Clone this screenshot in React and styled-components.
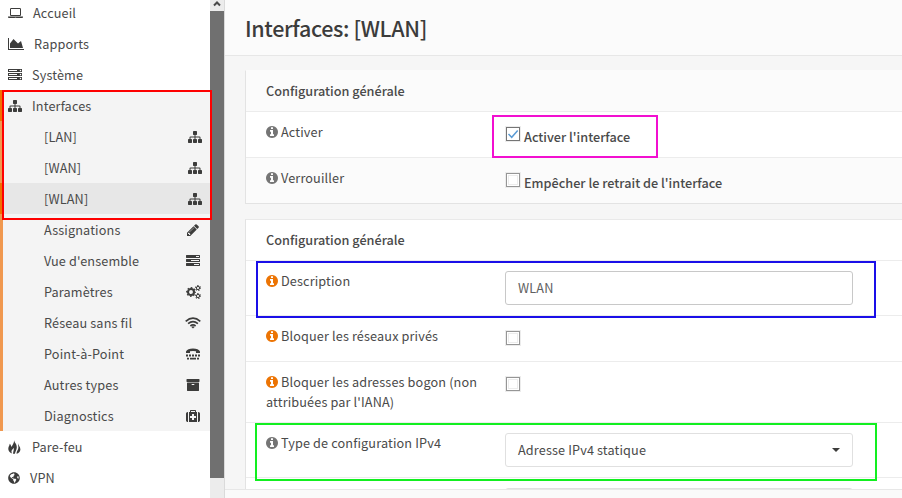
import React from "react";
import styled, { createGlobalStyle } from "styled-components";
import { FaGlobeAmericas } from "react-icons/fa";

const Global = createGlobalStyle`
  *, *::before, *::after { box-sizing: border-box; }
  body {
    margin: 0;
    overflow: hidden;
    font-family: "Noto Sans CJK SC", "Noto Sans", sans-serif;
    font-size: 12.7px;
    line-height: 20px;
    letter-spacing: 0.13px;
    color: #4a4a4a;
  }
`;

const Page = styled.div`
  position: relative;
  display: flex;
  width: 902px;
  height: 498px;
  overflow: hidden;
  background: #f6f6f6;
`;

const Sidebar = styled.nav`
  flex: none;
  width: 210px;
  height: 498px;
  overflow: hidden;
  background: #fff;
`;

const MenuList = styled.div`
  display: flex;
  flex-direction: column;
  margin-top: -3px;
`;

const MenuItem = styled.a`
  display: flex;
  flex: none;
  align-items: center;
  height: 31px;
  padding-left: ${(p) => (p.$open ? 5 : 8)}px;
  border-left: ${(p) => (p.$open ? "3px solid #f07000" : "0")};
  background: ${(p) => (p.$open ? "#f4f4f4" : "#fff")};
  svg { margin-right: ${(p) => p.$gap}px; }
`;

const SubItem = styled.a`
  display: flex;
  flex: none;
  align-items: center;
  justify-content: space-between;
  height: 31px;
  padding: 0 ${(p) => p.$end}px 0 41px;
  border-left: 3px solid ${(p) => (p.$active ? "#f07000" : "#f0984f")};
  background: ${(p) => (p.$active ? "#e7e7e7" : "#f4f4f4")};
`;

const Glyph = styled.svg`
  flex: none;
  display: block;
  fill: #3c3c3b;
  color: #3c3c3b;
`;

const Scrollbar = styled.div`
  display: flex;
  flex: none;
  flex-direction: column;
  width: 15px;
  background: #ececec;
  border-right: 1px solid #dadada;
`;

const ScrollUp = styled.div`
  display: flex;
  justify-content: center;
  height: 11px;
  svg { display: block; margin-left: -1px; }
`;

const Thumb = styled.div`
  height: 467px;
  background: #707070;
`;

const Main = styled.main`
  display: flex;
  flex: 1;
  flex-direction: column;
  min-width: 0;
  height: 498px;
`;

const PageHead = styled.header`
  flex: none;
  height: 56px;
  padding: 12px 0 0 20px;
  border-bottom: 1px solid #e7e7e7;
  background: #fbfbfb;
`;

const Title = styled.h1`
  margin: 0;
  font-size: 21.5px;
  font-weight: 500;
  line-height: 32px;
  letter-spacing: -0.36px;
  color: #3c3c3b;
`;

const Content = styled.div`
  display: flex;
  flex: 1;
  flex-direction: column;
  gap: 15px;
  min-height: 0;
  padding: 14px 0 0 20px;
  overflow: hidden;
`;

const Panel = styled.section`
  flex: none;
  border-left: 1px solid #e3e3e3;
  border-top: 1px solid ${(p) => (p.$shaded ? "#fbfbfb" : "#e9e9e9")};
  border-bottom: 1px solid #e3e3e3;
  background: #fff;
`;

const PanelTitle = styled.h2`
  height: 40px;
  margin: 0;
  padding: 10px 20px;
  font-size: 12.7px;
  font-weight: 500;
  line-height: 20px;
  letter-spacing: 0;
  background: ${(p) => (p.$shaded ? "#fbfbfb" : "#fff")};
`;

const Row = styled.div`
  display: grid;
  grid-template-columns: 239px 348px;
  height: ${(p) => p.$h}px;
  padding: 10px 20px 0;
  border-top: 1px solid #ececec;
  background: ${(p) => (p.$shaded ? "#fbfbfb" : "#fff")};
`;

const Label = styled.div`
  width: 225px;
  svg {
    display: inline-block;
    vertical-align: -1px;
    fill: ${(p) => (p.$accent ? "#ec7404" : "#757575")};
  }
`;

const CheckLine = styled.label`
  display: flex;
  align-items: flex-start;
  gap: 4px;
  padding: 5px 0 0 1px;
  font-weight: 500;
  letter-spacing: 0;
`;

const Box = styled.i`
  display: flex;
  align-items: center;
  justify-content: center;
  flex: none;
  width: 14px;
  height: 14px;
  border: 1px solid ${(p) => (p.$on ? "#757575" : "#969696")};
  background: #fff;
  box-shadow: 0 0 0 1px #ececec, inset 0 0 0 1px #fff, inset 0 0 0 2px ${(p) => (p.$on ? "#fff" : "#ececec")};
`;

const Field = styled.div`
  display: flex;
  align-items: center;
  justify-content: space-between;
  width: 348px;
  height: 34px;
  padding: 0 12px;
  border: 1px solid ${(p) => (p.$select ? "#e0e0e0" : "#c8c8c8")};
  border-radius: 3px;
  background: #fff;
  color: ${(p) => (p.$select ? "#4a4a4a" : "#606060")};
`;

const Caret = styled.span`
  border: 4px solid transparent;
  border-top-color: #3c3c3b;
  border-bottom: 0;
`;

const Footer = styled.footer`
  flex: none;
  height: 9px;
  border-top: 1px solid #e7e7e7;
  background: #fafafa;
`;

const Highlight = styled.div`
  position: absolute;
  left: ${(p) => p.$x}px;
  top: ${(p) => p.$y}px;
  width: ${(p) => p.$w}px;
  height: ${(p) => p.$h}px;
  border: 2px solid ${(p) => p.$c};
  pointer-events: none;
`;

const icons = {
  laptop: [1920, "M416 1280q-66 0-113-47t-47-113v-704q0-66 47-113t113-47h1088q66 0 113 47t47 113v704q0 66-47 113t-113 47h-1088zm-32-864v704q0 13 9.5 22.5t22.5 9.5h1088q13 0 22.5-9.5t9.5-22.5v-704q0-13-9.5-22.5t-22.5-9.5h-1088q-13 0-22.5 9.5t-9.5 22.5zm1376 928h160v96q0 40-47 68t-113 28h-1600q-66 0-113-28t-47-68v-96h1760zm-720 96q16 0 16-16t-16-16h-160q-16 0-16 16t16 16h160z"],
  area: [2048, "M2048 1536v128h-2048v-1536h128v1408h1920zm-384-1024l256 896h-1664v-576l448-576 576 576z"],
  server: [1792, "M128 1408h1024v-128h-1024v128zm0-512h1024v-128h-1024v128zm1568 448q0-40-28-68t-68-28-68 28-28 68 28 68 68 28 68-28 28-68zm-1568-960h1024v-128h-1024v128zm1568 448q0-40-28-68t-68-28-68 28-28 68 28 68 68 28 68-28 28-68zm0-512q0-40-28-68t-68-28-68 28-28 68 28 68 68 28 68-28 28-68zm96 832v384h-1792v-384h1792zm0-512v384h-1792v-384h1792zm0-512v384h-1792v-384h1792z"],
  sitemap: [1792, "M1792 1248v320q0 40-28 68t-68 28h-320q-40 0-68-28t-28-68v-320q0-40 28-68t68-28h96v-192h-512v192h96q40 0 68 28t28 68v320q0 40-28 68t-68 28h-320q-40 0-68-28t-28-68v-320q0-40 28-68t68-28h96v-192h-512v192h96q40 0 68 28t28 68v320q0 40-28 68t-68 28h-320q-40 0-68-28t-28-68v-320q0-40 28-68t68-28h96v-192q0-52 38-90t90-38h512v-192h-96q-40 0-68-28t-28-68v-320q0-40 28-68t68-28h320q40 0 68 28t28 68v320q0 40-28 68t-68 28h-96v192h512q52 0 90 38t38 90v192h96q40 0 68 28t28 68z"],
  pencil: [1792, "M491 1536l91-91-235-235-91 91v107h128v128h107zm523-928q0-22-22-22-10 0-17 7l-542 542q-7 7-7 17 0 22 22 22 10 0 17-7l542-542q7-7 7-17zm-54-192l416 416-832 832h-416v-416zm683 96q0 53-37 90l-166 166-416-416 166-165q36-38 90-38 53 0 91 38l235 234q37 39 37 91z"],
  tasks: [1792, "M1024 1408h640v-128h-640v128zm-384-512h1024v-128h-1024v128zm640-512h384v-128h-384v128zm512 832v256q0 26-19 45t-45 19h-1664q-26 0-45-19t-19-45v-256q0-26 19-45t45-19h1664q26 0 45 19t19 45zm0-512v256q0 26-19 45t-45 19h-1664q-26 0-45-19t-19-45v-256q0-26 19-45t45-19h1664q26 0 45 19t19 45zm0-512v256q0 26-19 45t-45 19h-1664q-26 0-45-19t-19-45v-256q0-26 19-45t45-19h1664q26 0 45 19t19 45z"],
  archive: [1792, "M1088 832q0-26-19-45t-45-19h-256q-26 0-45 19t-19 45 19 45 45 19h256q26 0 45-19t19-45zm576-192v960q0 26-19 45t-45 19h-1408q-26 0-45-19t-19-45v-960q0-26 19-45t45-19h1408q26 0 45 19t19 45zm64-448v256q0 26-19 45t-45 19h-1536q-26 0-45-19t-19-45v-256q0-26 19-45t45-19h1536q26 0 45 19t19 45z"],
  medkit: [1792, "M1280 1120v-192q0-14-9-23t-23-9h-224v-224q0-14-9-23t-23-9h-192q-14 0-23 9t-9 23v224h-224q-14 0-23 9t-9 23v192q0 14 9 23t23 9h224v224q0 14 9 23t23 9h192q14 0 23-9t9-23v-224h224q14 0 23-9t9-23zm-640-736h512v-128h-512v128zm-384 0v1280h-32q-92 0-158-66t-66-158v-832q0-92 66-158t158-66h32zm1152 0v1280h-1024v-1280h128v-160q0-40 28-68t68-28h576q40 0 68 28t28 68v160h128zm384 224v832q0 92-66 158t-158 66h-32v-1280h32q92 0 158 66t66 158z"],
};

const Gear = ({ x, y, r, w, teeth }) => {
  const outer = r + w / 2 + 0.3;
  const step = (2 * Math.PI * outer) / teeth / 2;
  return (
    <g fill="none" stroke="#3c3c3b">
      <circle cx={x} cy={y} r={r} strokeWidth={w} />
      <circle cx={x} cy={y} r={outer} strokeWidth="1.1" strokeDasharray={`${step} ${step}`} strokeDashoffset={step / 2} />
    </g>
  );
};

function Icon({ name }) {
  if (name === "cogs")
    return (
      <Glyph width="15" height="14" viewBox="0 0 15 14">
        <Gear x={5} y={7} r={3} w={2.1} teeth={8} />
        <Gear x={12} y={3} r={1.6} w={1} teeth={6} />
        <Gear x={12} y={11} r={1.6} w={1} teeth={6} />
      </Glyph>
    );
  if (name === "wifi")
    return (
      <Glyph width="16" height="14" viewBox="0 0 16 14">
        <g fill="none" stroke="#3c3c3b" strokeWidth="1.7">
          <path d="M.7 5.300Q8-1 15.300 5.300" />
          <path d="M3.100 7.700Q8 3.500 12.900 7.700" />
          <path d="M5.400 10Q8 7.900 10.600 10" />
        </g>
        <path d="M6.400 10.900Q8 9.800 9.600 10.900L8 12.500Z" />
      </Glyph>
    );
  if (name === "tty")
    return (
      <Glyph width="14" height="14" viewBox="0 0 14 14">
        <path d="M0 6V4.600C.8 2.500 3.500 1.500 7 1.500S13.200 2.500 14 4.600V6H10V4.300Q7 3.500 4 4.300V6Z" />
        <path d="M0 7.500h2v2H0zM3 7.500h2v2H3zM6 7.500h2v2H6zM9 7.500h2v2H9zM12 7.500h2v2h-2zM1 10.800h2v1.700H1zM4 10.800h6v1.700H4zM11 10.800h2v1.700h-2z" />
      </Glyph>
    );
  if (name === "globe") return <Glyph as={FaGlobeAmericas} size={12} />;
  if (name === "fire")
    return (
      <Glyph width="13" height="14" viewBox="0 0 13 14">
        <path d="M6.2 0C6 2.400 9 3.800 8.800 7.400C8.700 9.500 7.500 11 6.900 13.800L5 13.800C5.200 11.400 6.200 9.600 5.700 7.800C5 9.400 3.600 9.800 3.500 11.300C3.400 12.300 3.800 13 4.200 13.600C1.700 12.900 0 10.900 .3 8.300C.5 6.500 1.600 5.600 1.700 3.800C2.900 4.700 3.200 5.900 3 7.100C4.600 5.400 6 3.100 6.200 0ZM10 3.300C9.900 5 12.500 6.700 12.400 9.500C12.300 11.700 10.800 13.100 8.500 13.800C8.400 11.300 10.400 9.900 10.400 7.500C10.400 6 9.800 4.800 10 3.300Z" />
      </Glyph>
    );
  const [w, d] = icons[name];
  return (
    <Glyph width={(w * 14) / 1792} height="14" viewBox={`0 0 ${w} 1792`}>
      <path d={d} />
    </Glyph>
  );
}

const Info = () => (
  <svg width="12" height="12" viewBox="128 128 1536 1536">
    <path d="M1152 1376v-160q0-14-9-23t-23-9h-96v-512q0-14-9-23t-23-9h-320q-14 0-23 9t-9 23v160q0 14 9 23t23 9h96v320h-96q-14 0-23 9t-9 23v160q0 14 9 23t23 9h448q14 0 23-9t9-23zm-128-896v-160q0-14-9-23t-23-9h-192q-14 0-23 9t-9 23v160q0 14 9 23t23 9h192q14 0 23-9t9-23zm640 416q0 209-103 385.5t-279.5 279.5-385.5 103-385.5-103-279.5-279.5-103-385.5 103-385.5 279.5-279.5 385.5-103 385.5 103 279.5 279.5 103 385.500z" />
  </svg>
);

const Check = ({ on, children }) => (
  <CheckLine>
    <Box $on={on}>
      {on && (
        <svg width="12" height="12" viewBox="0 0 12 12" fill="none" stroke="#5b9bd5" strokeWidth="1.5">
          <path d="M1.500 6L4.700 9.300L10.700 2.500" />
        </svg>
      )}
    </Box>
    {children && <span>{children}</span>}
  </CheckLine>
);

const subItems = [
  ["[LAN]", "sitemap", 8],
  ["[WAN]", "sitemap", 8],
  ["[WLAN]", "sitemap", 8],
  ["Assignations", "pencil", 10],
  ["Vue d'ensemble", "tasks", 10],
  ["Paramètres", "cogs", 9],
  ["Réseau sans fil", "wifi", 9],
  ["Point-à-Point", "tty", 10],
  ["Autres types", "archive", 10],
  ["Diagnostics", "medkit", 10],
];

export default function App() {
  return (
    <>
      <Global />
      <Page>
        <Sidebar>
          <MenuList>
            <MenuItem $gap={10}><Icon name="laptop" />Accueil</MenuItem>
            <MenuItem $gap={10}><Icon name="area" />Rapports</MenuItem>
            <MenuItem $gap={10}><Icon name="server" />Système</MenuItem>
            <MenuItem $open $gap={10}><Icon name="sitemap" />Interfaces</MenuItem>
            {subItems.map(([text, icon, end]) => (
              <SubItem key={text} $active={text === "[WLAN]"} $end={end}>
                {text}
                <Icon name={icon} />
              </SubItem>
            ))}
            <MenuItem $gap={11}><Icon name="fire" />Pare-feu</MenuItem>
            <MenuItem $gap={10}><Icon name="globe" />VPN</MenuItem>
          </MenuList>
        </Sidebar>
        <Scrollbar>
          <ScrollUp>
            <svg width="8" height="8" viewBox="0 0 8 8" fill="none" stroke="#4a4a4a" strokeWidth="2">
              <path d="M1 5.500L4 2.500L7 5.500" />
            </svg>
          </ScrollUp>
          <Thumb />
        </Scrollbar>
        <Main>
          <PageHead><Title>Interfaces: [WLAN]</Title></PageHead>
          <Content>
            <Panel $shaded>
              <PanelTitle $shaded>Configuration générale</PanelTitle>
              <Row $h={46}>
                <Label><Info /> Activer</Label>
                <Check on>Activer l'interface</Check>
              </Row>
              <Row $h={46} $shaded>
                <Label><Info /> Verrouiller</Label>
                <Check>Empêcher le retrait de l'interface</Check>
              </Row>
            </Panel>
            <Panel>
              <PanelTitle>Configuration générale</PanelTitle>
              <Row $h={55}>
                <Label $accent><Info /> Description</Label>
                <Field>WLAN</Field>
              </Row>
              <Row $h={46}>
                <Label $accent><Info /> Bloquer les réseaux privés</Label>
                <Check />
              </Row>
              <Row $h={61}>
                <Label $accent><Info /> Bloquer les adresses bogon (non attribuées par l'IANA)</Label>
                <Check />
              </Row>
              <Row $h={55}>
                <Label><Info /> Type de configuration IPv4</Label>
                <Field $select>Adresse IPv4 statique<Caret /></Field>
              </Row>
              <Row $h={55}>
                <span />
                <Field $select />
              </Row>
            </Panel>
          </Content>
          <Footer />
        </Main>
        <Highlight $x={2} $y={90} $w={210} $h={130} $c="#fe0000" />
        <Highlight $x={492} $y={115} $w={166} $h={43} $c="#f20fd0" />
        <Highlight $x={256} $y={261} $w={620} $h={57} $c="#1a0fe8" />
        <Highlight $x={255} $y={423} $w={622} $h={58} $c="#12ef20" />
      </Page>
    </>
  );
}
